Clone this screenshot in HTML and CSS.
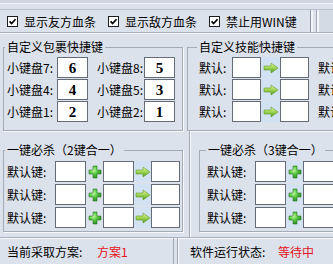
FILE: index.html
```html
<!DOCTYPE html>
<html>
<head>
<meta charset="utf-8">
<link rel="stylesheet" href="styles.css">
</head>
<body>
<svg class="defs" width="0" height="0" aria-hidden="true">
  <defs>
    <linearGradient id="ga" x1="0" y1="0" x2="0" y2="1">
      <stop offset="0" stop-color="#e2f7a0"/>
      <stop offset="0.5" stop-color="#9fd451"/>
      <stop offset="1" stop-color="#4a961c"/>
    </linearGradient>
    <radialGradient id="gp" cx="0.38" cy="0.35" r="0.7">
      <stop offset="0" stop-color="#c4f5a6"/>
      <stop offset="0.45" stop-color="#5ccb45"/>
      <stop offset="1" stop-color="#22861f"/>
    </radialGradient>
  </defs>
</svg>
<div class="win">
  <div class="topband"></div>
  <div class="toprow">
    <div class="checkbar">
      <label class="chk"><svg width="11" height="11" viewBox="0 0 11 11"><rect x="0.5" y="0.5" width="10" height="10" fill="#fff" stroke="#1d1d1d"/><path d="M2.6 5.4L4.6 7.6L8.5 3.2" fill="none" stroke="#000" stroke-width="1.7"/></svg><span>显示友方血条</span></label>
      <label class="chk"><svg width="11" height="11" viewBox="0 0 11 11"><rect x="0.5" y="0.5" width="10" height="10" fill="#fff" stroke="#1d1d1d"/><path d="M2.6 5.4L4.6 7.6L8.5 3.2" fill="none" stroke="#000" stroke-width="1.7"/></svg><span>显示敌方血条</span></label>
      <label class="chk"><svg width="11" height="11" viewBox="0 0 11 11"><rect x="0.5" y="0.5" width="10" height="10" fill="#fff" stroke="#1d1d1d"/><path d="M2.6 5.4L4.6 7.6L8.5 3.2" fill="none" stroke="#000" stroke-width="1.7"/></svg><span>禁止用WIN键</span></label>
    </div>
    <div class="side"></div>
  </div>
  <div class="main">
    <div class="col left">
      <fieldset class="grp g1">
        <legend>自定义包裹快捷键</legend>
        <div class="row"><span class="lbl l1">小键盘7:</span><span class="key">6</span><span class="lbl l2">小键盘8:</span><span class="key">5</span></div>
        <div class="row"><span class="lbl l1">小键盘4:</span><span class="key">4</span><span class="lbl l2">小键盘5:</span><span class="key">3</span></div>
        <div class="row"><span class="lbl l1">小键盘1:</span><span class="key">2</span><span class="lbl l2">小键盘2:</span><span class="key">1</span></div>
      </fieldset>
      <fieldset class="grp g3">
        <legend>一键必杀（2键合一）</legend>
        <div class="row"><span class="lbl l3">默认键:</span><span class="key"></span><span class="ico plus"><svg width="14" height="14" viewBox="0 0 14 14"><path d="M5 1H9V5H13V9H9V13H5V9H1V5H5Z" fill="url(#gp)" stroke="#2c7a22" stroke-width="0.6"/></svg></span><span class="key"></span><span class="ico arr"><svg width="16" height="12" viewBox="0 0 16 12"><path d="M1 4H8V1L15 6L8 11V8H1Z" fill="url(#ga)" stroke="#5d9b2b" stroke-width="0.6"/></svg></span><span class="key k3"></span></div>
        <div class="row"><span class="lbl l3">默认键:</span><span class="key"></span><span class="ico plus"><svg width="14" height="14" viewBox="0 0 14 14"><path d="M5 1H9V5H13V9H9V13H5V9H1V5H5Z" fill="url(#gp)" stroke="#2c7a22" stroke-width="0.6"/></svg></span><span class="key"></span><span class="ico arr"><svg width="16" height="12" viewBox="0 0 16 12"><path d="M1 4H8V1L15 6L8 11V8H1Z" fill="url(#ga)" stroke="#5d9b2b" stroke-width="0.6"/></svg></span><span class="key k3"></span></div>
        <div class="row"><span class="lbl l3">默认键:</span><span class="key"></span><span class="ico plus"><svg width="14" height="14" viewBox="0 0 14 14"><path d="M5 1H9V5H13V9H9V13H5V9H1V5H5Z" fill="url(#gp)" stroke="#2c7a22" stroke-width="0.6"/></svg></span><span class="key"></span><span class="ico arr"><svg width="16" height="12" viewBox="0 0 16 12"><path d="M1 4H8V1L15 6L8 11V8H1Z" fill="url(#ga)" stroke="#5d9b2b" stroke-width="0.6"/></svg></span><span class="key k3"></span></div>
      </fieldset>
    </div>
    <div class="col right">
      <fieldset class="grp g2">
        <legend>自定义技能快捷键</legend>
        <div class="row"><span class="lbl l4">默认:</span><span class="key k2"></span><span class="ico arr2"><svg width="16" height="12" viewBox="0 0 16 12"><path d="M1 4H8V1L15 6L8 11V8H1Z" fill="url(#ga)" stroke="#5d9b2b" stroke-width="0.6"/></svg></span><span class="key k2"></span><span class="lbl l5">默认:</span></div>
        <div class="row"><span class="lbl l4">默认:</span><span class="key k2"></span><span class="ico arr2"><svg width="16" height="12" viewBox="0 0 16 12"><path d="M1 4H8V1L15 6L8 11V8H1Z" fill="url(#ga)" stroke="#5d9b2b" stroke-width="0.6"/></svg></span><span class="key k2"></span><span class="lbl l5">默认:</span></div>
        <div class="row"><span class="lbl l4">默认:</span><span class="key k2"></span><span class="ico arr2"><svg width="16" height="12" viewBox="0 0 16 12"><path d="M1 4H8V1L15 6L8 11V8H1Z" fill="url(#ga)" stroke="#5d9b2b" stroke-width="0.6"/></svg></span><span class="key k2"></span><span class="lbl l5">默认:</span></div>
      </fieldset>
      <div class="rbottom">
        <fieldset class="grp g4">
          <legend>一键必杀（3键合一）</legend>
          <div class="row"><span class="lbl l3">默认键:</span><span class="key"></span><span class="ico plus2"><svg width="14" height="14" viewBox="0 0 14 14"><path d="M5 1H9V5H13V9H9V13H5V9H1V5H5Z" fill="url(#gp)" stroke="#2c7a22" stroke-width="0.6"/></svg></span><span class="key"></span></div>
          <div class="row"><span class="lbl l3">默认键:</span><span class="key"></span><span class="ico plus2"><svg width="14" height="14" viewBox="0 0 14 14"><path d="M5 1H9V5H13V9H9V13H5V9H1V5H5Z" fill="url(#gp)" stroke="#2c7a22" stroke-width="0.6"/></svg></span><span class="key"></span></div>
          <div class="row"><span class="lbl l3">默认键:</span><span class="key"></span><span class="ico plus2"><svg width="14" height="14" viewBox="0 0 14 14"><path d="M5 1H9V5H13V9H9V13H5V9H1V5H5Z" fill="url(#gp)" stroke="#2c7a22" stroke-width="0.6"/></svg></span><span class="key"></span></div>
        </fieldset>
      </div>
    </div>
  </div>
  <div class="status">
    <div class="cell c1"><span class="slbl s1">当前采取方案:</span><span class="red">方案1</span></div>
    <div class="cell c2"><span class="slbl s2">软件运行状态:</span><span class="red">等待中</span></div>
  </div>
</div>
</body>
</html>
```

FILE: styles.css
```css
html, body {
  margin: 0;
  padding: 0;
}
body {
  width: 333px;
  height: 264px;
  overflow: hidden;
  background: #dce2eb;
  font-family: "Noto Sans CJK SC", "Noto Sans", sans-serif;
  font-size: 12px;
  line-height: 14px;
  color: #000;
}
.defs {
  display: block;
  width: 0;
  height: 0;
  overflow: hidden;
}
.win {
  width: 360px;
}
.topband {
  height: 9px;
  border-bottom: 1px solid #b6bfcb;
  background: linear-gradient(#cfd6e1 0 3px, #eef1f5 3px 4px, #dce2eb 4px);
}
.toprow {
  display: flex;
  height: 22px;
}
.checkbar {
  width: 311px;
  box-sizing: border-box;
  border-right: 1px solid #8f98a4;
  display: flex;
  align-items: center;
  gap: 12px;
  padding-left: 7px;
  padding-top: 1px;
}
.chk {
  display: flex;
  align-items: center;
  gap: 6px;
}
.chk svg {
  display: block;
}
.side {
  flex: 1;
  background: linear-gradient(90deg, #f3f5f8 0 2px, #dce2eb 2px 5px, #9fa8b4 5px 6px, #f3f5f8 6px 8px, #d3dae4 8px);
}
.main {
  display: flex;
  height: 204px;
  border-top: 1px solid #a9b1bd;
  box-shadow: inset 0 1px 0 #f5f7fa;
}
.col {
  display: flex;
  flex-direction: column;
}
.left {
  width: 185px;
  flex: none;
}
.right {
  flex: 1;
}
.grp {
  box-sizing: border-box;
  margin: 0;
  border: 1px solid #a3abb7;
  box-shadow: 1px 1px 0 #f7f9fb;
  min-width: 0;
}
.grp legend {
  padding: 0 2px;
  margin-left: -2px;
  line-height: 14px;
}
.g1 {
  width: 180px;
  margin: 7px 0 0 3px;
  padding: 3px 0 8px 3px;
}
.g3 {
  width: 180px;
  margin: 12px 0 0 3px;
  padding: 4px 0 3px 3px;
}
.g2 {
  width: 170px;
  margin: 7px 0 0 2px;
  padding: 3px 0 8px 11px;
}
.rbottom {
  flex: 1;
  margin-left: 4px;
  border-left: 1px solid #a3abb7;
  box-shadow: inset 1px 0 0 #f7f9fb;
}
.g4 {
  width: 160px;
  margin: 12px 0 0 9px;
  padding: 4px 0 3px 7px;
}
.g4 legend {
  margin-left: -1px;
}
.row {
  display: flex;
  align-items: center;
  height: 21px;
}
.g1 .row + .row,
.g2 .row + .row {
  margin-top: 1px;
}
.g3 .row + .row,
.g4 .row + .row {
  margin-top: 2px;
}
.lbl {
  flex: none;
  white-space: nowrap;
}
.l1 { width: 50px; }
.l2 { width: 47px; margin-left: 9px; }
.l3 { width: 48px; }
.l4 { width: 33px; }
.l5 { margin-left: 9px; }
.key {
  flex: none;
  box-sizing: border-box;
  width: 31px;
  height: 21px;
  background: #fff;
  border: 1px solid #656c76;
  display: flex;
  align-items: center;
  justify-content: center;
  font-family: "Liberation Serif", serif;
  font-weight: bold;
  font-size: 15px;
}
.k2 { width: 29px; }
.k3 { width: 29px; }
.ico {
  flex: none;
  height: 21px;
  display: flex;
  align-items: center;
  justify-content: center;
}
.ico svg { display: block; }
.plus { width: 17px; }
.plus2 { width: 17px; background: #d5e2f1; }
.arr { width: 17px; background: #d3e2f3; }
.arr2 { width: 19px; background: #d3e2f3; }
.status {
  display: flex;
  height: 26px;
  border-top: 1px solid #a9b1bd;
  box-shadow: inset 0 1px 0 #f5f7fa;
}
.cell {
  display: flex;
  align-items: center;
  box-sizing: border-box;
  padding-top: 2px;
}
.c1 {
  width: 174px;
  padding-left: 7px;
  border-right: 1px solid #a3abb7;
}
.c2 {
  flex: 1;
  margin-left: 3px;
  padding-left: 12px;
  border-left: 1px solid #a3abb7;
  box-shadow: inset 1px 0 0 #f7f9fb;
}
.slbl { flex: none; white-space: nowrap; }
.s1 { width: 90px; }
.s2 { width: 88px; }
.red { color: #e3121b; }
```
